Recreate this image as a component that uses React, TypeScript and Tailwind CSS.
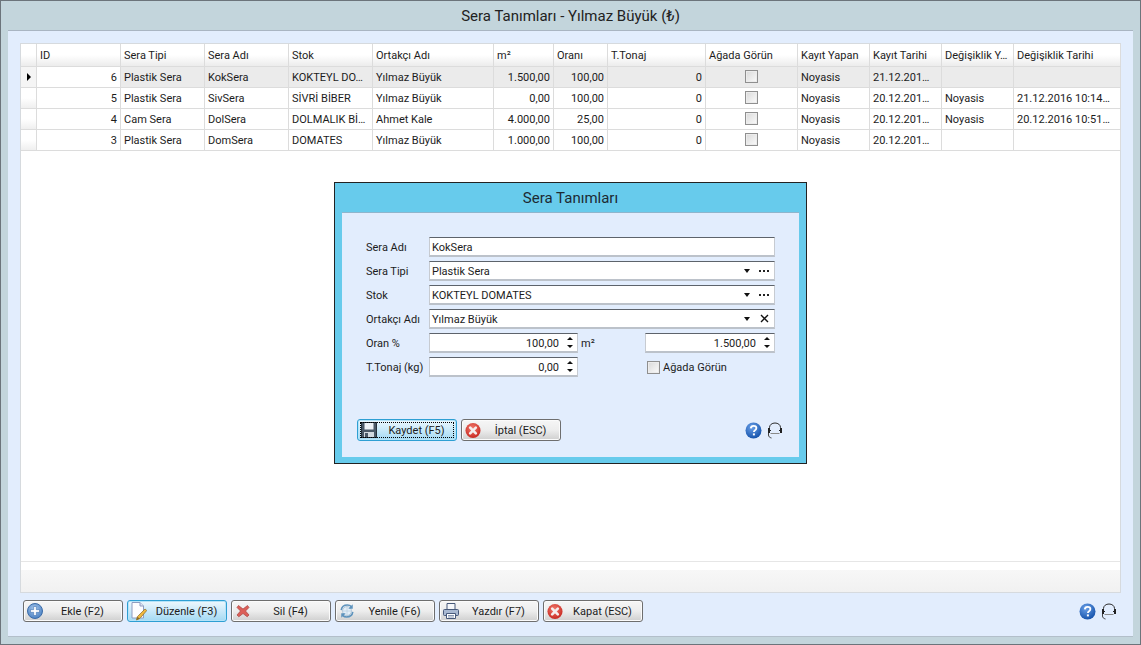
import React from "react";

const gridCols = "grid grid-cols-[16px_84px_84px_84px_84px_121px_60px_54px_98px_92px_72px_72px_72px_107px]";

function HelpIcon() {
  return (
    <svg width="17" height="17" viewBox="0 0 17 17">
      <defs><radialGradient id="hg" cx="40%" cy="30%" r="75%"><stop offset="0" stopColor="#6aa0e8" /><stop offset="1" stopColor="#114fa8" /></radialGradient></defs>
      <circle cx="8.5" cy="8.5" r="8" fill="url(#hg)" />
      <path d="M5.8 6.4C5.9 4.7 7.1 3.8 8.6 3.8c1.6 0 2.8 1 2.8 2.3 0 1.2-.8 1.8-1.6 2.3-.6.4-.9.8-.9 1.600" fill="none" stroke="#fff" strokeWidth="1.8" />
      <rect x="7.9" y="11.4" width="2" height="2" fill="#fff" />
    </svg>
  );
}

function HeadsetIcon() {
  return (
    <svg width="16" height="17" viewBox="0 0 16 17" fill="none" stroke="#2b2b2b" strokeWidth="1">
      <path d="M2.500 7V5.500C2.500 2.800 5 1 8 1s5.500 1.800 5.500 4.500V7" />
      <rect x="1" y="6" width="2" height="5" fill="#222" stroke="none" />
      <rect x="13" y="6" width="2" height="5" fill="#222" stroke="none" />
      <rect x="3" y="8" width="1" height="1" fill="#222" stroke="none" />
      <rect x="12" y="8" width="1" height="1" fill="#222" stroke="none" />
      <path d="M3.500 11.500H12.500" stroke="#8a8a8a" />
      <path d="M1.500 11V13C1.500 14.500 2.500 15.500 4.500 16" stroke="#444" />
    </svg>
  );
}

function RedCircleX() {
  return (
    <svg width="17" height="17" viewBox="0 0 17 17">
      <defs><radialGradient id="rc" cx="45%" cy="35%" r="70%"><stop offset="0" stopColor="#f27a6d" /><stop offset="1" stopColor="#c5231c" /></radialGradient></defs>
      <circle cx="8.5" cy="8.500" r="8" fill="url(#rc)" />
      <path d="M5.500 5.500l6 6M11.500 5.500l-6 6" stroke="#f5eeee" strokeWidth="2.800" strokeLinecap="round" />
    </svg>
  );
}

function Floppy() {
  return (
    <svg width="16" height="16" viewBox="0 0 16 16">
      <rect x="0.500" y="0.500" width="15" height="15" fill="#4a5866" stroke="#27313b" />
      <rect x="3.500" y="1" width="9" height="6.500" fill="#eef2f6" />
      <rect x="3" y="10" width="10" height="5" fill="#d3dae0" />
      <rect x="4" y="11" width="3" height="4" fill="#4a5866" />
    </svg>
  );
}

function PlusCircle() {
  return (
    <svg width="16" height="16" viewBox="0 0 16 16">
      <defs><radialGradient id="pc" cx="45%" cy="35%" r="75%"><stop offset="0" stopColor="#a5c6ec" /><stop offset="1" stopColor="#3f78bd" /></radialGradient></defs>
      <circle cx="8" cy="8" r="7.500" fill="url(#pc)" stroke="#3c6ca8" />
      <path d="M6.700 3.500h2.600v3.200h3.200v2.600H9.300v3.200H6.700V9.300H3.500V6.700h3.200z" fill="#fff" stroke="#2f62a4" strokeWidth="0.500" />
    </svg>
  );
}

function DocPencil() {
  return (
    <svg width="16" height="19" viewBox="0 0 16 19">
      <path d="M1 .500h8l3.500 3.500v12H1z" fill="#fdfdff" stroke="#8f9cc0" />
      <path d="M9 .500V4h3.500" fill="#dfe5f2" stroke="#8f9cc0" />
      <path d="M14 7l1.800 1.500-7 8L5.500 18l.8-3.300z" fill="#f0b83f" stroke="#8a6a25" strokeWidth="0.700" />
      <path d="M5.500 18l.8-3.300 2.500 1.800z" fill="#8a6a25" />
    </svg>
  );
}

function RedX() {
  return (
    <svg width="16" height="16" viewBox="0 0 16 16">
      <path d="M3.500 2.500L8 6l4.500-3.500 1.500 2L10.500 8l3.500 4-1.800 1.800L8 10.500l-4.200 3.300L2 12l3.500-4L2 4.500z" fill="#dc5f58" stroke="#a9433f" strokeWidth="0.700" strokeLinejoin="round" />
    </svg>
  );
}

function Refresh() {
  return (
    <svg width="18" height="16" viewBox="0 0 18 16" fill="none">
      <circle cx="9" cy="8" r="5" fill="#e3eef7" stroke="#9db8d0" strokeWidth="0.800" />
      <path d="M4 8h10M9 3v10" stroke="#b7cde0" strokeWidth="0.800" />
      <path d="M2.500 7C3 3.500 6 1.300 9.500 1.300c1.800 0 3.300.7 4.400 1.800" stroke="#5d93bd" strokeWidth="1.800" />
      <path d="M15.500 .500V5.500h-5z" fill="#5d93bd" />
      <path d="M15.500 9C15 12.500 12 14.700 8.500 14.700c-1.800 0-3.300-.7-4.400-1.800" stroke="#5d93bd" strokeWidth="1.800" />
      <path d="M2.500 15.500V10.500h5z" fill="#5d93bd" />
    </svg>
  );
}

function Printer() {
  return (
    <svg width="16" height="16" viewBox="0 0 16 16">
      <path d="M4 .500h8v6H4z" fill="#f5f7fa" stroke="#47597a" />
      <rect x="0.500" y="6.500" width="15" height="6" rx="1" fill="#a9b9d2" stroke="#47597a" />
      <path d="M3.500 10.500h9v5h-9z" fill="#fff" stroke="#47597a" />
      <path d="M5 12.500h6M5 14h6" stroke="#8b9ab4" />
    </svg>
  );
}

function TopBtn({ icon, label, active, focus, nudge }: { icon: React.ReactNode; label: string; active?: boolean; focus?: boolean; nudge?: boolean }) {
  const tone = active
    ? "border-[#2e9fd3] bg-gradient-to-b from-[#eef8fd] via-[#c9e9f9] to-[#a3d9f3] shadow-[inset_0_0_0_1px_#b5e3f8]"
    : "border-[#6e6e6e] bg-gradient-to-b from-[#f6f6f6] via-[#ededed] to-[#cfcfcf] shadow-[inset_0_0_0_1px_#fbfbfb]";
  return (
    <button className={`relative flex h-[22px] w-[100px] items-center rounded-[3px] border pl-[3px] text-[#1c1c1c] ${tone}`}>
      <span className="flex w-[16px] shrink-0 items-center justify-center">{icon}</span>
      <span className={`flex-1 text-center ${nudge ? "mt-[2px]" : ""}`}>{label}</span>
      {focus && <span className="pointer-events-none absolute inset-[2px] border border-dotted border-black" />}
    </button>
  );
}

function Check({ className }: { className?: string }) {
  return <span className={`block h-[13px] w-[13px] border border-[#8f8f8f] bg-gradient-to-br from-[#d9d9d9] to-[#fbfbfb] shadow-[inset_0_0_0_1px_#ececec] ${className ?? ""}`} />;
}

function Arrow() {
  return <span className="block h-0 w-0 border-x-[3px] border-t-[4px] border-x-transparent border-t-[#111]" />;
}

function Spinner() {
  return (
    <span className="flex w-[9px] shrink-0 flex-col items-center gap-[5px]">
      <span className="block h-0 w-0 border-x-[3px] border-b-[3px] border-x-transparent border-b-[#111]" />
      <span className="block h-0 w-0 border-x-[3px] border-t-[3px] border-x-transparent border-t-[#111]" />
    </span>
  );
}

const inputBox = "flex h-[20px] items-center border-t border-t-[#5d636b] border-x border-x-[#c7cbd1] border-b-2 border-b-[#bcc2ca] bg-white";

function Combo({ value, x }: { value: string; x?: boolean }) {
  return (
    <div className={`${inputBox} w-[346px] pl-[2px] pr-[2px]`}>
      <span className="mt-[3px] flex-1 leading-[12px]">{value}</span>
      <span className="mr-[6px]"><Arrow /></span>
      <span className="flex w-[16px] justify-center">
        {x ? (
          <svg width="9" height="9" viewBox="0 0 9 9"><path d="M1 1l7 7M8 1L1 8" stroke="#111" strokeWidth="1.400" /></svg>
        ) : (
          <svg width="10" height="3" viewBox="0 0 10 3" fill="#222"><rect x="0" y="1" width="2" height="2" /><rect x="4" y="1" width="2" height="2" /><rect x="8" y="1" width="2" height="2" /></svg>
        )}
      </span>
    </div>
  );
}

function Spin({ value, width }: { value: string; width: string }) {
  return (
    <div className={`${inputBox} ${width} justify-end pr-[3px]`}>
      <span className="mr-[6px] mt-[3px] leading-[12px]">{value}</span>
      <Spinner />
    </div>
  );
}

function Label({ children }: { children: React.ReactNode }) {
  return <span className="mt-[1px] w-[63px] shrink-0 whitespace-nowrap leading-[12px]">{children}</span>;
}

const headers = ["", "ID", "Sera Tipi", "Sera Adı", "Stok", "Ortakçı Adı", "m²", "Oranı", "T.Tonaj", "Ağada Görün", "Kayıt Yapan", "Kayıt Tarihi", "Değişiklik Y…", "Değişiklik Tarihi"];

const rows = [
  ["6", "Plastik Sera", "KokSera", "KOKTEYL DO…", "Yılmaz Büyük", "1.500,00", "100,00", "0", "Noyasis", "21.12.201…", "", ""],
  ["5", "Plastik Sera", "SivSera", "SİVRİ BİBER", "Yılmaz Büyük", "0,00", "100,00", "0", "Noyasis", "20.12.201…", "Noyasis", "21.12.2016 10:14…"],
  ["4", "Cam Sera", "DolSera", "DOLMALIK Bİ…", "Ahmet Kale", "4.000,00", "25,00", "0", "Noyasis", "20.12.201…", "Noyasis", "20.12.2016 10:51…"],
  ["3", "Plastik Sera", "DomSera", "DOMATES", "Yılmaz Büyük", "1.000,00", "100,00", "0", "Noyasis", "20.12.201…", "", ""],
];

const cellBase = "flex items-center overflow-hidden whitespace-nowrap border-r border-r-[#dcdcdc] px-[3px] pt-[2px]";

function Row({ r, selected }: { r: string[]; selected: boolean }) {
  const cell = (v: string, right?: boolean) => (
    <div className={`${cellBase} ${right ? "justify-end" : ""}`}>{v}</div>
  );
  return (
    <div className={`${gridCols} h-[21px] border-b border-b-[#dcdcdc] ${selected ? "bg-[#ebebeb]" : "bg-white"}`}>
      <div className={`flex items-center justify-center border-r border-r-[#dcdcdc] ${selected ? "bg-[#f5f5f5]" : "bg-gradient-to-b from-white via-white to-[#efefef]"}`}>
        {selected && <span className="block h-0 w-0 border-y-[4px] border-l-[4px] border-y-transparent border-l-black" />}
      </div>
      <div className={`${cellBase} justify-end bg-white`}>{r[0]}</div>
      {cell(r[1])}
      {cell(r[2])}
      {cell(r[3])}
      {cell(r[4])}
      {cell(r[5], true)}
      {cell(r[6], true)}
      {cell(r[7], true)}
      <div className="flex items-center justify-center border-r border-r-[#dcdcdc] pb-[2px]"><Check /></div>
      {cell(r[8])}
      {cell(r[9])}
      {cell(r[10])}
      {cell(r[11])}
    </div>
  );
}

function GridPanel() {
  return (
    <div className="flex h-[550px] flex-col border border-[#d6dade] bg-white">
      <div className={`${gridCols} h-[23px] border-b border-b-[#dcdcdc] bg-gradient-to-b from-white via-white to-[#ececec]`}>
        {headers.map((h, i) => (
          <div key={i} className={cellBase}>{h}</div>
        ))}
      </div>
      {rows.map((r, i) => <Row key={i} r={r} selected={i === 0} />)}
      <div className="flex-1" />
      <div className="h-[9px] border-t border-t-[#e6e6e6] bg-white" />
      <div className="h-[22px] bg-gradient-to-b from-[#f7f7f7] to-[#f1f1f1]" />
    </div>
  );
}

function Dialog() {
  return (
    <div className="absolute left-[333px] top-[181px] flex h-[282px] w-[473px] flex-col border border-[#222] bg-[#67cbec] px-[7px] pb-[6px]">
      <div className="flex h-[29px] shrink-0 items-center justify-center pt-[1px] text-[15px] text-[#1d2a33]">Sera Tanımları</div>
      <div className="relative flex-1 border-t border-t-[#8fb5cc] bg-[#e2edfd] pl-[24px] pr-[24px] pt-[24px]">
        <div className="flex flex-col gap-[4px]">
          <div className="flex h-[20px] items-center"><Label>Sera Adı</Label><div className={`${inputBox} w-[346px] pl-[2px]`}><span className="mt-[3px] leading-[12px]">KokSera</span></div></div>
          <div className="flex h-[20px] items-center"><Label>Sera Tipi</Label><Combo value="Plastik Sera" /></div>
          <div className="flex h-[20px] items-center"><Label>Stok</Label><Combo value="KOKTEYL DOMATES" /></div>
          <div className="flex h-[20px] items-center"><Label>Ortakçı Adı</Label><Combo value="Yılmaz Büyük" x /></div>
          <div className="flex h-[20px] items-center">
            <Label>Oran %</Label>
            <Spin value="100,00" width="w-[149px]" />
            <span className="ml-[3px] mt-[2px] w-[64px]">m²</span>
            <Spin value="1.500,00" width="w-[130px]" />
          </div>
          <div className="flex h-[20px] items-center">
            <Label>T.Tonaj (kg)</Label>
            <Spin value="0,00" width="w-[149px]" />
            <span className="ml-[69px]"><Check /></span>
            <span className="ml-[3px] mt-[2px]">Ağada Görün</span>
          </div>
        </div>
        <div className="absolute bottom-[16px] left-[15px] flex gap-[4px]">
          <TopBtn icon={<Floppy />} label="Kaydet (F5)" active focus nudge />
          <TopBtn icon={<RedCircleX />} label="İptal (ESC)" nudge />
        </div>
        <div className="absolute bottom-[18px] right-[16px] flex items-center gap-[5px]"><HelpIcon /><HeadsetIcon /></div>
      </div>
    </div>
  );
}

export default function App() {
  return (
    <div className="relative h-[645px] w-[1141px] overflow-hidden border border-[#6c747b] bg-[#c3d5dc] font-['Roboto','Noto_Sans',sans-serif] text-[11px] text-[#1c1c1c]">
      <div className="flex h-[29px] items-center justify-center pt-[2px] text-[15px] text-[#222]">Sera Tanımları - Yılmaz Büyük (₺)</div>
      <div className="mx-[7px] flex h-[607px] flex-col border-t border-t-[#a9b5c2] border-b border-b-[#b3bfca] bg-[#e2edfd] px-[12px] pt-[12px]">
        <GridPanel />
        <div className="mt-[7px] flex items-center gap-[4px] pl-[3px]">
          <TopBtn icon={<PlusCircle />} label="Ekle (F2)" nudge />
          <TopBtn icon={<DocPencil />} label="Düzenle (F3)" active nudge />
          <TopBtn icon={<RedX />} label="Sil (F4)" nudge />
          <TopBtn icon={<Refresh />} label="Yenile (F6)" nudge />
          <TopBtn icon={<Printer />} label="Yazdır (F7)" nudge />
          <TopBtn icon={<RedCircleX />} label="Kapat (ESC)" nudge />
          <div className="ml-auto mr-[4px] flex items-center gap-[5px]"><HelpIcon /><HeadsetIcon /></div>
        </div>
      </div>
      <Dialog />
    </div>
  );
}
